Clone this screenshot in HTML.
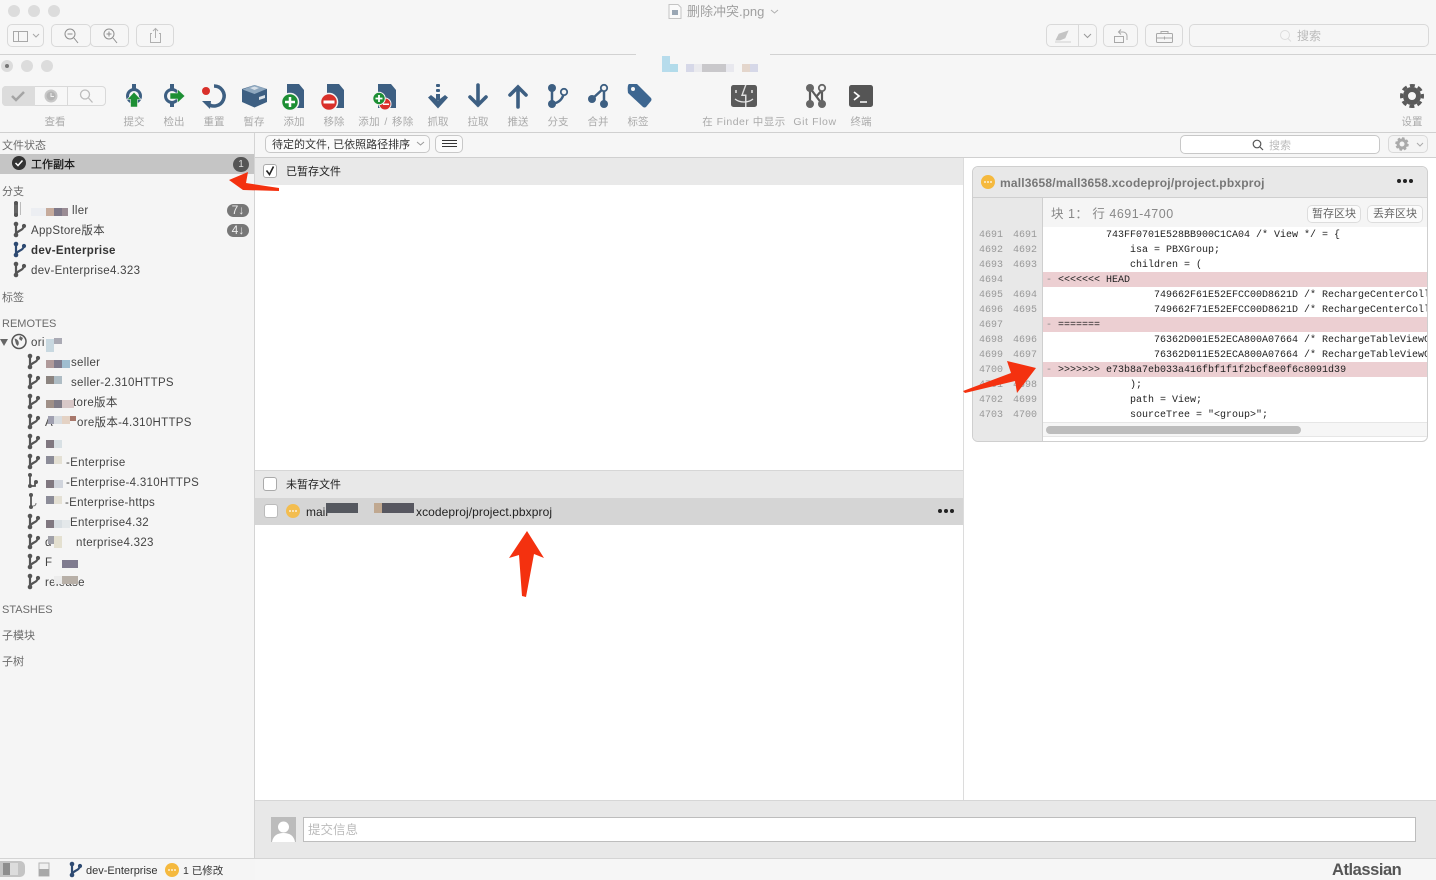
<!DOCTYPE html>
<html lang="zh"><head><meta charset="utf-8"><title>删除冲突.png</title>
<style>
html,body{margin:0;padding:0;width:1436px;height:880px;overflow:hidden;background:#f6f6f6}
body{font-family:"Liberation Sans","Noto Sans CJK SC",sans-serif;font-size:11px;color:#333;position:relative}
.a{position:absolute}
.t{position:absolute;white-space:nowrap;line-height:14px;height:14px;margin-top:1px}
.tl{position:absolute;width:60px;margin-left:-30px;text-align:center;top:115px;font-size:10.5px;line-height:14px;color:#aaa;white-space:nowrap}
.tl.w{width:120px;margin-left:-60px}
.b{position:absolute;box-sizing:border-box;border:1px solid #d9d9d9;border-radius:5px;background:#f6f6f6}
.h{color:#6b6b6b;font-size:11px}
.s{font-size:11.5px;letter-spacing:.3px;color:#444}
.r{position:absolute;height:8px;width:8px}
.c{position:absolute;left:0;width:384px;height:15px;box-sizing:border-box;padding:1px 0 0 3px;line-height:15px;font-family:"Liberation Mono",monospace;font-size:10px;color:#222;white-space:pre;overflow:hidden}
.c.p{background:#eccfd2}
.n{position:absolute;height:15px;line-height:15px;margin-top:1px;font-family:"Liberation Mono",monospace;font-size:10px;color:#999;white-space:pre;word-spacing:-1px}
.pill{position:absolute;left:227px;width:22px;height:13px;border-radius:7px;background:#777;color:#eee;font-size:12px;line-height:13px;text-align:center}
</style></head><body>

<!-- outer preview toolbar -->
<div class="a" style="left:0;top:54px;width:636px;height:1px;background:#d2d2d2"></div>
<div class="a" style="left:770px;top:54px;width:666px;height:1px;background:#d2d2d2"></div>
<div class="t" style="left:687px;top:4px;margin-top:0;font-size:13px;line-height:16px;height:16px;color:#a0a0a0">删除冲突.png</div>
<div class="b" style="left:7px;top:24px;width:37px;height:23px"></div>
<div class="b" style="left:51px;top:24px;width:40px;height:23px"></div>
<div class="b" style="left:90px;top:24px;width:39px;height:23px"></div>
<div class="b" style="left:136px;top:24px;width:38px;height:23px"></div>
<div class="b" style="left:1046px;top:24px;width:51px;height:23px"></div>
<div class="a" style="left:1078px;top:24px;width:1px;height:23px;background:#d9d9d9"></div>
<div class="b" style="left:1103px;top:24px;width:35px;height:23px"></div>
<div class="b" style="left:1145px;top:24px;width:38px;height:23px"></div>
<div class="b" style="left:1189px;top:24px;width:240px;height:23px"></div>
<div class="t" style="left:1297px;top:29px;margin-top:0;font-size:12px;color:#bbb">搜索</div>

<!-- blurred title -->
<div class="a" style="left:662px;top:56px;width:8px;height:16px;background:#b7dcec"></div>
<div class="a" style="left:670px;top:64px;width:8px;height:8px;background:#b2dbea"></div>
<div class="a" style="left:686px;top:64px;width:8px;height:8px;background:#d6d8e8"></div>
<div class="a" style="left:694px;top:64px;width:8px;height:8px;background:#eaeaee"></div>
<div class="a" style="left:702px;top:64px;width:24px;height:8px;background:#c9c8cb"></div>
<div class="a" style="left:726px;top:64px;width:8px;height:8px;background:#e8e8ee"></div>
<div class="a" style="left:742px;top:64px;width:8px;height:8px;background:#e4d6cc"></div>
<div class="a" style="left:750px;top:64px;width:8px;height:8px;background:#d6d8e8"></div>

<!-- app toolbar -->
<div class="a" style="left:2px;top:86px;width:104px;height:20px;box-sizing:border-box;border:1px solid #d9d9d9;border-radius:4px;background:#f7f7f7"></div>
<div class="a" style="left:2px;top:86px;width:33px;height:20px;background:#dcdcdc;border-radius:4px 0 0 4px"></div>
<div class="a" style="left:67px;top:86px;width:1px;height:20px;background:#d9d9d9"></div>
<div class="tl" style="left:55px">查看</div>
<div class="tl" style="left:134px">提交</div>
<div class="tl" style="left:174px">检出</div>
<div class="tl" style="left:214px">重置</div>
<div class="tl" style="left:254px">暂存</div>
<div class="tl" style="left:294px">添加</div>
<div class="tl" style="left:334px">移除</div>
<div class="tl w" style="left:386px;letter-spacing:.4px;word-spacing:1px">添加 / 移除</div>
<div class="tl" style="left:438px">抓取</div>
<div class="tl" style="left:478px">拉取</div>
<div class="tl" style="left:518px">推送</div>
<div class="tl" style="left:558px">分支</div>
<div class="tl" style="left:598px">合并</div>
<div class="tl" style="left:638px">标签</div>
<div class="tl w" style="left:744px;letter-spacing:.5px">在 Finder 中显示</div>
<div class="tl" style="left:815px;letter-spacing:.6px">Git Flow</div>
<div class="tl" style="left:861px">终端</div>
<div class="tl" style="left:1412px">设置</div>
<div class="a" style="left:0;top:132px;width:1436px;height:1px;background:#d0d0d0"></div>

<!-- filter bar -->
<div class="a" style="left:0;top:133px;width:255px;height:747px;background:#f5f5f5"></div>
<div class="a" style="left:254px;top:133px;width:1px;height:725px;background:#d4d4d4"></div>
<div class="a" style="left:255px;top:157px;width:1181px;height:1px;background:#d0d0d0"></div>
<div class="b" style="left:265px;top:135px;width:165px;height:18px;background:#fafafa;border-color:#c8c8c8"></div>
<div class="t" style="left:272px;top:137px;color:#333;font-size:11px">待定的文件, 已依照路径排序</div>
<div class="b" style="left:435px;top:135px;width:28px;height:18px;background:#fafafa;border-color:#c8c8c8"></div>
<div class="b" style="left:1180px;top:135px;width:200px;height:19px;background:#fff;border-color:#c8c8c8"></div>
<div class="t" style="left:1269px;top:138px;color:#bbb;font-size:11px">搜索</div>
<div class="b" style="left:1388px;top:135px;width:40px;height:18px;background:#f4f4f4"></div>

<!-- sidebar -->
<div class="t h" style="left:2px;top:138px">文件状态</div>
<div class="a" style="left:0;top:154px;width:254px;height:20px;background:#c5c5c5"></div>
<div class="t" style="left:31px;top:157px;color:#111;font-size:11px;-webkit-text-stroke:.2px #111">工作副本</div>
<div class="a" style="left:233px;top:157px;width:16px;height:15px;border-radius:8px;background:#555;color:#ddd;font-size:10px;line-height:15px;text-align:center">1</div>
<div class="t h" style="left:2px;top:184px">分支</div>
<div class="t s" style="left:72px;top:203px">ller</div>
<div class="t s" style="left:31px;top:223px">AppStore版本</div>
<div class="t s" style="left:31px;top:243px;font-weight:bold;color:#333">dev-Enterprise</div>
<div class="t s" style="left:31px;top:263px">dev-Enterprise4.323</div>
<div class="pill" style="top:204px">7↓</div>
<div class="pill" style="top:224px">4↓</div>
<div class="t h" style="left:2px;top:290px">标签</div>
<div class="t h" style="left:2px;top:316px">REMOTES</div>
<div class="t s" style="left:31px;top:335px">ori</div>
<div class="t s" style="left:71px;top:355px">seller</div>
<div class="t s" style="left:71px;top:375px">seller-2.310HTTPS</div>
<div class="t s" style="left:73px;top:395px">tore版本</div>
<div class="t s" style="left:45px;top:415px">A</div>
<div class="t s" style="left:77px;top:415px">ore版本-4.310HTTPS</div>
<div class="t s" style="left:66px;top:455px">-Enterprise</div>
<div class="t s" style="left:66px;top:475px">-Enterprise-4.310HTTPS</div>
<div class="t s" style="left:65px;top:495px">-Enterprise-https</div>
<div class="t s" style="left:70px;top:515px">Enterprise4.32</div>
<div class="t s" style="left:45px;top:535px">d</div>
<div class="t s" style="left:76px;top:535px">nterprise4.323</div>
<div class="t s" style="left:45px;top:555px">F</div>
<div class="t s" style="left:45px;top:575px">release</div>
<div class="t h" style="left:2px;top:602px">STASHES</div>
<div class="t h" style="left:2px;top:628px">子模块</div>
<div class="t h" style="left:2px;top:654px">子树</div>

<!-- redaction blocks -->
<div class="r" style="left:31px;top:208px;width:15px;background:#eceef2"></div>
<div class="r" style="left:46px;top:208px;background:#c6ab9c"></div>
<div class="r" style="left:54px;top:208px;background:#7e7888"></div>
<div class="r" style="left:62px;top:208px;width:6px;background:#9a8c94"></div>
<div class="r" style="left:46px;top:339px;height:13px;background:#c8d8e0"></div>
<div class="r" style="left:54px;top:338px;height:6px;background:#aaaab4"></div>
<div class="r" style="left:46px;top:360px;background:#b09a9a"></div>
<div class="r" style="left:54px;top:360px;background:#7e7a8c"></div>
<div class="r" style="left:62px;top:360px;background:#9fbdd0"></div>
<div class="r" style="left:46px;top:376px;background:#8c8480"></div>
<div class="r" style="left:54px;top:376px;background:#aebcc4"></div>
<div class="r" style="left:46px;top:400px;background:#a09088"></div>
<div class="r" style="left:54px;top:400px;background:#807c88"></div>
<div class="r" style="left:62px;top:400px;width:12px;background:#d8c8c8"></div>
<div class="r" style="left:48px;top:416px;width:6px;background:#a0a0b0"></div>
<div class="r" style="left:54px;top:416px;background:#d8dce0"></div>
<div class="r" style="left:62px;top:416px;background:#e4d2c4"></div>
<div class="r" style="left:70px;top:416px;width:6px;height:5px;background:#a8786c"></div>
<div class="r" style="left:46px;top:440px;background:#807880"></div>
<div class="r" style="left:54px;top:440px;background:#d8e0e4"></div>
<div class="r" style="left:46px;top:456px;background:#8c8c98"></div>
<div class="r" style="left:54px;top:456px;background:#e4e0d4"></div>
<div class="r" style="left:46px;top:480px;background:#807880"></div>
<div class="r" style="left:54px;top:480px;width:9px;background:#d0d4dc"></div>
<div class="r" style="left:46px;top:496px;background:#8c8c98"></div>
<div class="r" style="left:54px;top:496px;background:#e4e0d4"></div>
<div class="r" style="left:46px;top:520px;background:#807880"></div>
<div class="r" style="left:54px;top:520px;background:#d8dee2"></div>
<div class="r" style="left:62px;top:520px;background:#e4e8ea"></div>
<div class="r" style="left:48px;top:536px;width:6px;background:#a0a0a8"></div>
<div class="r" style="left:54px;top:536px;height:12px;background:#e4e0d0"></div>
<div class="r" style="left:62px;top:560px;width:16px;background:#807c90"></div>
<div class="r" style="left:54px;top:576px;background:#ececec"></div>
<div class="r" style="left:62px;top:576px;width:16px;background:#b8b0a8"></div>

<!-- middle column -->
<div class="a" style="left:255px;top:158px;width:708px;height:642px;background:#fff"></div>
<div class="a" style="left:255px;top:158px;width:708px;height:27px;background:#e9e9e9"></div>
<div class="t" style="left:286px;top:164px;color:#222">已暂存文件</div>
<div class="a" style="left:255px;top:470px;width:708px;height:1px;background:#d6d6d6"></div>
<div class="a" style="left:255px;top:471px;width:708px;height:27px;background:#e8e8e8"></div>
<div class="t" style="left:286px;top:477px;color:#222">未暂存文件</div>
<div class="a" style="left:255px;top:498px;width:708px;height:27px;background:#d5d5d5"></div>
<div class="t" style="left:306px;top:504px;color:#222;font-size:12px">mail</div>
<div class="t" style="left:416px;top:504px;color:#222;font-size:12px;letter-spacing:.08px">xcodeproj/project.pbxproj</div>
<div class="a" style="left:326px;top:503px;width:32px;height:10px;background:#55585f"></div>
<div class="a" style="left:374px;top:503px;width:8px;height:10px;background:#c0a890"></div>
<div class="a" style="left:382px;top:503px;width:32px;height:10px;background:#575760"></div>
<div class="a" style="left:263px;top:164px;width:14px;height:14px;box-sizing:border-box;border:1px solid #aaa;border-radius:3px;background:#fff"></div>
<div class="a" style="left:263px;top:477px;width:14px;height:14px;box-sizing:border-box;border:1px solid #aaa;border-radius:3px;background:#fff"></div>
<div class="a" style="left:264px;top:504px;width:14px;height:14px;box-sizing:border-box;border:1px solid #bbb;border-radius:3px;background:#fff"></div>

<!-- right column -->
<div class="a" style="left:963px;top:158px;width:1px;height:642px;background:#dcdcdc"></div>
<div class="a" style="left:964px;top:158px;width:472px;height:642px;background:#fff"></div>
<div class="a" style="left:972px;top:166px;width:456px;height:276px;box-sizing:border-box;border:1px solid #cfcfcf;border-radius:6px;background:#fff;overflow:hidden">
  <div class="a" style="left:0;top:0;width:454px;height:30px;background:#e8e8e8;border-bottom:1px solid #cfcfcf"></div>
  <div class="t" style="left:27px;top:8px;font-size:12px;letter-spacing:.2px;font-weight:bold;color:#777">mall3658/mall3658.xcodeproj/project.pbxproj</div>
  <div class="a" style="left:0;top:31px;width:69px;height:243px;background:#e8e8e8;border-right:1px solid #cfcfcf"></div>
  <div class="a" style="left:70px;top:31px;width:384px;height:29px;background:#f5f5f5"></div>
  <div class="t" style="left:78px;top:39px;font-size:12.5px;letter-spacing:.5px;color:#888">块 1： 行 4691-4700</div>
  <div class="b" style="left:334px;top:38px;width:54px;height:18px;background:#fbfbfb;color:#666;text-align:center;line-height:17px;font-size:11px;border-color:#ddd">暂存区块</div>
  <div class="b" style="left:394px;top:38px;width:56px;height:18px;background:#fbfbfb;color:#666;text-align:center;line-height:17px;font-size:11px;border-color:#ddd">丢弃区块</div>

  <div class="a" style="left:70px;top:60px;width:384px;height:195px;overflow:hidden">
    <div class="c" style="top:0">          743FF0701E528BB900C1CA04 /* View */ = {</div>
    <div class="c" style="top:15px">              isa = PBXGroup;</div>
    <div class="c" style="top:30px">              children = (</div>
    <div class="c p" style="top:45px"><span style="color:#888">-</span> &lt;&lt;&lt;&lt;&lt;&lt;&lt; HEAD</div>
    <div class="c" style="top:60px">                  749662F61E52EFCC00D8621D /* RechargeCenterCollectionViewCell.m */,</div>
    <div class="c" style="top:75px">                  749662F71E52EFCC00D8621D /* RechargeCenterCollectionViewCell.xib */,</div>
    <div class="c p" style="top:90px"><span style="color:#888">-</span> =======</div>
    <div class="c" style="top:105px">                  76362D001E52ECA800A07664 /* RechargeTableViewCell.h */,</div>
    <div class="c" style="top:120px">                  76362D011E52ECA800A07664 /* RechargeTableViewCell.m */,</div>
    <div class="c p" style="top:135px"><span style="color:#888">-</span> &gt;&gt;&gt;&gt;&gt;&gt;&gt; e73b8a7eb033a416fbf1f1f2bcf8e0f6c8091d39</div>
    <div class="c" style="top:150px">              );</div>
    <div class="c" style="top:165px">              path = View;</div>
    <div class="c" style="top:180px">              sourceTree = "&lt;group&gt;";</div>
  </div>
  <div class="n" style="left:6px;top:60px">4691  4691</div>
  <div class="n" style="left:6px;top:75px">4692  4692</div>
  <div class="n" style="left:6px;top:90px">4693  4693</div>
  <div class="n" style="left:6px;top:105px">4694</div>
  <div class="n" style="left:6px;top:120px">4695  4694</div>
  <div class="n" style="left:6px;top:135px">4696  4695</div>
  <div class="n" style="left:6px;top:150px">4697</div>
  <div class="n" style="left:6px;top:165px">4698  4696</div>
  <div class="n" style="left:6px;top:180px">4699  4697</div>
  <div class="n" style="left:6px;top:195px">4700</div>
  <div class="n" style="left:6px;top:210px">4701  4698</div>
  <div class="n" style="left:6px;top:225px">4702  4699</div>
  <div class="n" style="left:6px;top:240px">4703  4700</div>
  <div class="a" style="left:70px;top:255px;width:384px;height:15px;background:#f6f6f6;border-top:1px solid #e6e6e6;border-bottom:1px solid #e6e6e6;box-sizing:border-box"></div>
  <div class="a" style="left:73px;top:259px;width:255px;height:8px;border-radius:4px;background:#bdbdbd"></div>
</div>

<!-- commit area -->
<div class="a" style="left:255px;top:800px;width:1181px;height:58px;background:#e8e8e8;border-top:1px solid #d6d6d6;box-sizing:border-box"></div>
<div class="a" style="left:271px;top:817px;width:25px;height:25px;background:#bcbcbc"></div>
<div class="a" style="left:303px;top:817px;width:1113px;height:25px;box-sizing:border-box;border:1px solid #bdbdbd;background:#fff"></div>
<div class="t" style="left:308px;top:821px;font-size:12.5px;line-height:16px;height:16px;color:#bbb">提交信息</div>

<!-- status bar -->
<div class="a" style="left:0;top:858px;width:1436px;height:1px;background:#d4d4d4"></div>
<div class="a" style="left:0;top:861px;width:25px;height:16px;border-radius:0 5px 5px 0;background:#c4c4c4"></div>
<div class="t" style="left:86px;top:863px;font-size:11px;color:#333">dev-Enterprise</div>
<div class="t" style="left:183px;top:863px;font-size:10.5px;color:#333">1 已修改</div>
<div class="t" style="left:1332px;top:860px;font-size:16.5px;line-height:18px;height:18px;font-weight:bold;color:#555;letter-spacing:-.45px">Atlassian</div>

<!-- icons overlay -->
<svg class="a" style="left:0;top:0" width="1436" height="880" viewBox="0 0 1436 880" xmlns="http://www.w3.org/2000/svg">
<defs>
<symbol id="br" viewBox="0 0 14 15" overflow="visible">
<path d="M3 2V13M3 12C5 8 10 9 11 4" fill="none" stroke="currentColor" stroke-width="2.2"/>
<circle cx="3" cy="2" r="2.300"/><circle cx="3" cy="13" r="2.300"/><circle cx="11" cy="4" r="2.100"/>
</symbol>
</defs>

<!-- traffic lights -->
<g fill="#dcdcdc"><circle cx="14" cy="11" r="6"/><circle cx="34" cy="11" r="6"/><circle cx="54" cy="11" r="6"/><circle cx="7" cy="66" r="6"/><circle cx="27" cy="66" r="6"/><circle cx="47" cy="66" r="6"/></g>
<circle cx="7" cy="66" r="2" fill="#777"/>

<!-- outer toolbar icons -->
<g fill="none" stroke="#a8a8a8" stroke-width="1">
<rect x="13.500" y="31.500" width="14" height="10"/><path d="M18.500 31.500v10" />
<path d="M33 34l3 3 3-3"/></g>
<g fill="none" stroke="#8f8f8f" stroke-width="1">
<circle cx="70" cy="34" r="5"/><path d="M74 38l4 5M67.500 34h5"/>
<circle cx="109" cy="34" r="5"/><path d="M113 38l4 5M106.500 34h5M109 31.500v5"/>
</g>
<path d="M152 33.500h-1.500v9h10v-9H159M155.500 38V29M153 31l2.500-2.500L158 31" fill="none" stroke="#b0b0b0"/>
<path d="M1055 42h16M1056 40l3-6 9-3-3 7-5 2z" fill="#c4c4c4" stroke="#c4c4c4" stroke-width=".7"/>
<path d="M1084 34l3.500 3.500 3.500-3.500" fill="none" stroke="#999"/>
<g fill="none" stroke="#a8a8a8"><rect x="1114.500" y="36.500" width="9" height="6"/><path d="M1119 32h4a4 4 0 0 1 4 4v4M1121 29.500L1118.500 32l2.500 2.500"/>
<rect x="1156.500" y="33.500" width="16" height="9" rx="1"/><path d="M1161 33.500v-2h7v2M1156.500 38h16M1164.500 36.500v3"/></g>
<circle cx="1285" cy="35" r="4.500" fill="none" stroke="#ddd"/><path d="M1288 38.500l3 3" stroke="#ddd"/>
<path d="M672 4.500h6l3 3v11h-12v-14z" fill="#fafafa" stroke="#c4c4c4"/><rect x="672" y="10" width="6" height="5" fill="#9aa7b4"/>
<path d="M771 10l3.500 3 3.500-3" fill="none" stroke="#b0b0b0"/>

<!-- segmented -->
<path d="M12 96l4 4 8-8" fill="none" stroke="#a4a4a4" stroke-width="2.500"/>
<circle cx="51" cy="96" r="5.500" fill="#b5b5b5" stroke="#c8c8c8" stroke-width="2"/><path d="M51 93v3.500h3" fill="none" stroke="#f0f0f0"/>
<circle cx="85" cy="94.500" r="4.500" fill="none" stroke="#bbb" stroke-width="1.300"/><path d="M88.500 98l4 4.500" stroke="#bbb" stroke-width="1.300"/>

<!-- commit -->
<g fill="none" stroke="#3d5f82" stroke-width="3"><circle cx="134" cy="96" r="6.500"/></g><rect x="132" y="84" width="4" height="6" fill="#3d5f82"/>
<path d="M134 92l7 7.500h-3.500v7.500h-7v-7.500H127z" fill="#1d8f34" stroke="#f5f5f5" stroke-width=".6"/>
<!-- checkout -->
<circle cx="172" cy="96" r="6.500" fill="none" stroke="#3d5f82" stroke-width="3"/><rect x="170" y="84" width="4" height="6" fill="#3d5f82"/><rect x="170" y="102" width="4" height="5" fill="#3d5f82"/>
<path d="M185 96l-7.500-7v4h-7.500v6h7.500v4z" fill="#1d8f34" stroke="#f5f5f5" stroke-width=".6"/>
<!-- reset -->
<path d="M214 86a10 10 0 1 1-7 17" fill="none" stroke="#3d5f82" stroke-width="3.500"/><path d="M202 101l9 0-1 8z" fill="#3d5f82"/><circle cx="206" cy="91" r="4" fill="#d9302a"/>
<!-- stash -->
<path d="M254.500 85l12.500 4v13l-12.500 5.500L242 102V89z" fill="#3d5f82"/><path d="M242.500 89.500l12-4.500 12 4-12 5z" fill="#8fa8bf"/><path d="M250 88l4.500-1.500 4.500 1.500-4.500 2z" fill="#d7e0e8"/><path d="M259 97l6-2v3l-6 2z" fill="#dde4ea"/>
<!-- add -->
<path d="M289 84h10l5 6v18h-17V84z" fill="#3d5f82"/><circle cx="290" cy="102" r="8.500" fill="#1d8f34" stroke="#f5f5f5" stroke-width="1.500"/><path d="M290 97v10M285 102h10" stroke="#fff" stroke-width="2.500"/>
<!-- remove -->
<path d="M329 84h10l5 6v18h-17V84z" fill="#3d5f82"/><circle cx="329" cy="102" r="8.500" fill="#d9302a" stroke="#f5f5f5" stroke-width="1.500"/><rect x="323.500" y="100.500" width="11" height="3" fill="#fff"/>
<!-- add/remove -->
<path d="M381 84h10l5 6v18h-18V84z" fill="#3d5f82"/><circle cx="385" cy="104" r="6" fill="#d9302a" stroke="#f5f5f5"/><rect x="383" y="103.500" width="6" height="1.500" fill="#fff"/><circle cx="379" cy="98.500" r="6.200" fill="#1d8f34" stroke="#f5f5f5"/><path d="M379 95v7M375.500 98.500h7" stroke="#fff" stroke-width="1.800"/>
<!-- fetch -->
<g fill="#3d5f82"><rect x="436" y="84" width="4" height="3" rx="1"/><rect x="436" y="89" width="4" height="3" rx="1"/><rect x="436" y="94" width="4" height="6"/><path d="M428 97.500l3-2.500 7 5.500 7-5.500 3 2.500-10 11z"/></g>
<!-- pull -->
<path d="M478 85v20M470 97l8 8 8-8" fill="none" stroke="#3d5f82" stroke-width="3.600" stroke-linecap="round"/>
<!-- push -->
<path d="M518 107V87M510 95l8-8 8 8" fill="none" stroke="#3d5f82" stroke-width="3.600" stroke-linecap="round"/>
<!-- branch -->
<path d="M552 88v16M552 104c6-1 11-4 12-12" fill="none" stroke="#3d5f82" stroke-width="2.500"/><circle cx="552" cy="88" r="4" fill="#3d5f82"/><circle cx="552" cy="104" r="4" fill="#3d5f82"/><circle cx="564" cy="92" r="3.200" fill="#f5f5f5" stroke="#3d5f82" stroke-width="1.800"/>
<!-- merge -->
<path d="M604 88v16M604 88l-12 11" fill="none" stroke="#3d5f82" stroke-width="2.500"/><circle cx="592" cy="99" r="4" fill="#3d5f82"/><circle cx="604" cy="104" r="4" fill="#3d5f82"/><circle cx="604" cy="88" r="3.200" fill="#f5f5f5" stroke="#3d5f82" stroke-width="1.800"/>
<!-- tag -->
<path d="M629 84h8l14 14q1 1.500 0 3l-5 6q-1.500 1-3 0l-15-14q-1-8 1-9z" fill="#3d6690"/><circle cx="633" cy="89" r="2" fill="#f5f5f5"/>
<!-- finder -->
<rect x="731" y="85" width="26" height="22" rx="2.500" fill="#5a5a5a"/><path d="M745 85l-4 11h4v11h1.500V94.500h-3.500l3.500-9.500z" fill="#ddd"/><path d="M736 90v3M752 90v3" stroke="#e4e4e4" stroke-width="1.500"/><path d="M735 99c5 4 13 4 18 0" fill="none" stroke="#e4e4e4" stroke-width="1.300"/>
<!-- git flow -->
<path d="M810 88v16M822 88v16M810 88l12 16M822 90l-6 7" fill="none" stroke="#5a5a5a" stroke-width="2.200"/><circle cx="810" cy="88" r="4" fill="#666"/><circle cx="810" cy="104" r="4" fill="#666"/><circle cx="822" cy="104" r="4" fill="#666"/><circle cx="822" cy="88" r="3.200" fill="#f5f5f5" stroke="#666" stroke-width="1.800"/>
<!-- terminal -->
<rect x="849" y="85" width="24" height="22" rx="2.500" fill="#555"/><path d="M854 92l5 4-5 4" fill="none" stroke="#fff" stroke-width="1.700"/><path d="M860 102h7" stroke="#fff" stroke-width="1.500"/>
<!-- settings -->
<circle cx="1412" cy="96" r="6.500" fill="none" stroke="#5a5a5a" stroke-width="5"/>
<circle cx="1412" cy="96" r="10.500" fill="none" stroke="#5a5a5a" stroke-width="3" stroke-dasharray="5 3.250" stroke-dashoffset="2.500"/>

<!-- filter bar -->
<path d="M417 142l3.500 3 3.500-3" fill="none" stroke="#999"/>
<path d="M442 140.500h15M442 143.500h15M442 146.500h15" stroke="#333"/>
<circle cx="1257" cy="144" r="3.800" fill="none" stroke="#555" stroke-width="1.200"/><path d="M1260 147l3 3" stroke="#555" stroke-width="1.200"/>
<circle cx="1402" cy="144" r="4" fill="none" stroke="#aaa" stroke-width="3"/><circle cx="1402" cy="144" r="5.500" fill="none" stroke="#aaa" stroke-width="2.500" stroke-dasharray="2.400 1.900"/>
<path d="M1417 143l3 3 3-3" fill="none" stroke="#aaa"/>

<!-- sidebar icons -->
<circle cx="19" cy="163" r="7" fill="#333"/><path d="M15.500 163l2.500 2.500 4.500-5" fill="none" stroke="#fff" stroke-width="1.500"/>
<g style="color:#555" fill="#555">
<rect x="14" y="202" width="4" height="14" fill="#666"/><circle cx="16" cy="203" r="2" /><circle cx="16" cy="215" r="2"/><rect x="20" y="202" width="1" height="13" fill="#bbb"/>
<use href="#br" x="13" y="222" width="14" height="15"/>
<use href="#br" x="13" y="262" width="14" height="15"/>
<use href="#br" x="27" y="354" width="14" height="15"/>
<use href="#br" x="27" y="374" width="14" height="15"/>
<use href="#br" x="27" y="394" width="14" height="15"/>
<use href="#br" x="27" y="414" width="14" height="15"/>
<use href="#br" x="27" y="434" width="14" height="15"/>
<use href="#br" x="27" y="454" width="14" height="15"/>
<use href="#br" x="27" y="514" width="14" height="15"/>
<use href="#br" x="27" y="534" width="14" height="15"/>
<use href="#br" x="27" y="554" width="14" height="15"/>
<use href="#br" x="27" y="574" width="14" height="15"/>
<path d="M30 474v12M30 486h5l0-3" fill="none" stroke="#555" stroke-width="1.800"/><circle cx="30" cy="475" r="2"/><circle cx="30" cy="486" r="2"/><circle cx="36" cy="482" r="2"/>
<path d="M31 494v13" fill="none" stroke="#555" stroke-width="1.800"/><circle cx="31" cy="495" r="2"/><circle cx="31" cy="507" r="2"/><path d="M33 506q3 0 3-3" fill="none" stroke="#777"/>
</g>
<g style="color:#2e4a72" fill="#2e4a72"><use href="#br" x="13" y="242" width="14" height="15"/><use href="#br" x="69" y="862" width="14" height="15"/></g>
<path d="M0 339l8 0-4 7z" fill="#666"/>
<circle cx="19" cy="341.500" r="7" fill="#f5f5f5" stroke="#555" stroke-width="1.500"/><path d="M14.500 338.500q3 .5 4 3t-1 4.500l-1.500-2zM20 336l3 2-1.500 3-2.500-2z" fill="#666"/>

<!-- status dots -->
<circle cx="988" cy="182" r="7" fill="#f5b93e"/><g fill="#fff"><circle cx="985" cy="182" r=".9"/><circle cx="988" cy="182" r=".9"/><circle cx="991" cy="182" r=".9"/></g>
<circle cx="293" cy="511" r="7" fill="#f3bd4f"/><g fill="#fff"><circle cx="290" cy="511" r=".9"/><circle cx="293" cy="511" r=".9"/><circle cx="296" cy="511" r=".9"/></g>
<circle cx="172" cy="870" r="7" fill="#f5b93e"/><g fill="#fff"><circle cx="169" cy="870" r=".9"/><circle cx="172" cy="870" r=".9"/><circle cx="175" cy="870" r=".9"/></g>
<g fill="#222"><circle cx="940" cy="511" r="2"/><circle cx="946" cy="511" r="2"/><circle cx="952" cy="511" r="2"/><circle cx="1399" cy="181" r="2"/><circle cx="1405" cy="181" r="2"/><circle cx="1411" cy="181" r="2"/></g>

<!-- checkbox tick -->
<path d="M266.500 170.500l3 4 4-8" fill="none" stroke="#222" stroke-width="1.600"/>

<!-- avatar -->
<circle cx="283.500" cy="827" r="5.500" fill="#fff"/><path d="M272 842c1-6 5-9 11.500-9s10.500 3 11.500 9z" fill="#fff"/>

<!-- status bar icons -->
<rect x="3" y="863" width="15" height="12" fill="#dcdcdc"/><rect x="3" y="863" width="7" height="12" fill="#8e8e8e"/>
<rect x="39" y="863" width="10" height="13" fill="#f0f0f0" stroke="#b4b4b4"/><rect x="39" y="869" width="10" height="7" fill="#a8a8a8"/>

<!-- red arrows -->
<path d="M229 180L248 172L246 183L279 188L279 191L243 190Z" fill="#f4310f"/>
<path d="M963 391L1011 373L1007 361L1036 368L1017 393L1015 381L965 393Z" fill="#f4310f"/>
<path d="M527 531L544 558L534 554L526 597L522 596L519 555L509 558Z" fill="#f4310f"/>
</svg>
</body></html>
